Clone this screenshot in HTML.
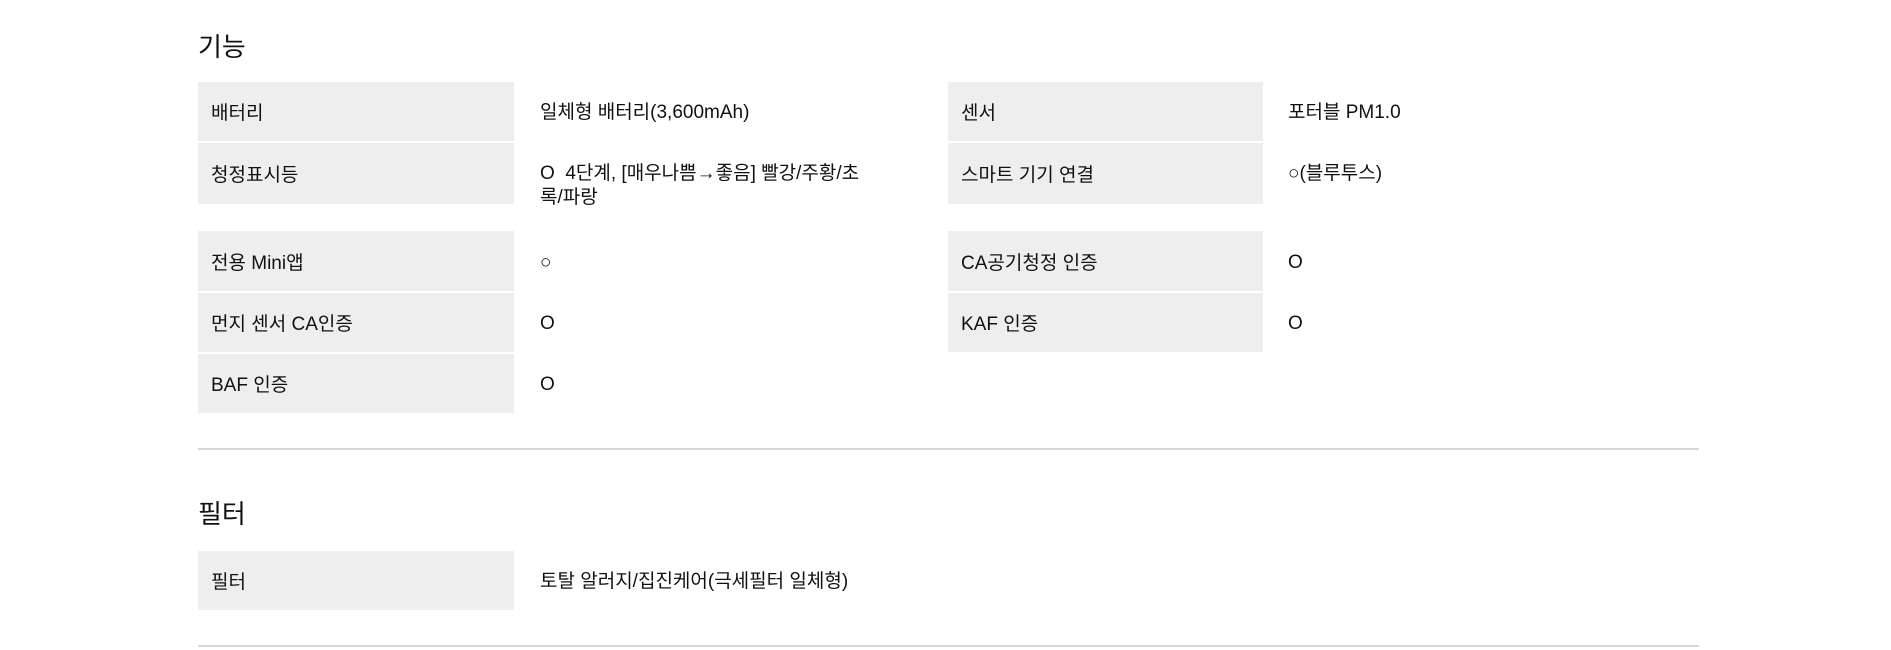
<!DOCTYPE html>
<html><head><meta charset="utf-8"><style>
body{margin:0;width:1891px;height:650px;background:#fff;font-family:"Liberation Sans","Noto Sans CJK KR",sans-serif;color:#111;position:relative;overflow:hidden}
.a{position:absolute}
.h{font-size:26px;left:198px}
.c{background:#eeeeee;position:absolute;width:316px;box-sizing:border-box;padding-left:13px;font-size:19px;display:flex;align-items:center}
.v{position:absolute;font-size:19px;line-height:24px;white-space:nowrap}
.l{position:absolute;left:198px;width:1501px;height:2px;background:#d8d8d8}
</style></head><body>
<div class="a h" style="top:27px">기능</div>
<div class="c" style="left:198px;top:82px;height:59px">배터리</div>
<div class="v" style="left:540px;top:101px">일체형 배터리(3,600mAh)</div>
<div class="c" style="left:948px;top:82px;width:315px;height:59px">센서</div>
<div class="v" style="left:1288px;top:101px">포터블 PM1.0</div>

<div class="c" style="left:198px;top:143px;height:61px">청정표시등</div>
<div class="v" style="left:540px;top:162px">O &nbsp;4단계, [매우나쁨→좋음] 빨강/주황/초<br>록/파랑</div>
<div class="c" style="left:948px;top:143px;width:315px;height:61px">스마트 기기 연결</div>
<div class="v" style="left:1288px;top:162px">○(블루투스)</div>

<div class="c" style="left:198px;top:231px;height:60px">전용 Mini앱</div>
<div class="v" style="left:540px;top:251px">○</div>
<div class="c" style="left:948px;top:231px;width:315px;height:60px">CA공기청정 인증</div>
<div class="v" style="left:1288px;top:251px">O</div>

<div class="c" style="left:198px;top:293px;height:59px">먼지 센서 CA인증</div>
<div class="v" style="left:540px;top:312px">O</div>
<div class="c" style="left:948px;top:293px;width:315px;height:59px">KAF 인증</div>
<div class="v" style="left:1288px;top:312px">O</div>

<div class="c" style="left:198px;top:354px;height:59px">BAF 인증</div>
<div class="v" style="left:540px;top:373px">O</div>

<div class="l" style="top:448px"></div>
<div class="a h" style="top:494px">필터</div>
<div class="c" style="left:198px;top:551px;height:59px">필터</div>
<div class="v" style="left:540px;top:570px">토탈 알러지/집진케어(극세필터 일체형)</div>
<div class="l" style="top:645px"></div>
</body></html>
